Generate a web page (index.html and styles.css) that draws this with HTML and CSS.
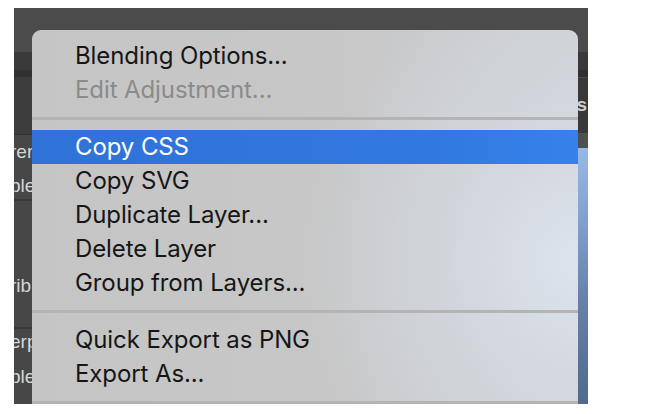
FILE: index.html
```html
<!DOCTYPE html>
<html lang="en">
<head>
<meta charset="utf-8">
<title>Layer context menu</title>
<link rel="stylesheet" href="styles.css">
</head>
<body>
<div class="screen">
  <div class="app">
    <div class="topbar"></div>
    <div class="toolbar"></div>
    <div class="panels">
      <div class="left-col">
        <div class="lhead"></div>
        <div class="group g1">
          <div class="lrow">rer</div>
          <div class="lrow">ble</div>
        </div>
        <div class="group g2">
          <div class="lrow">rib</div>
        </div>
        <div class="group g3">
          <div class="lrow">erp</div>
          <div class="lrow">ble</div>
        </div>
      </div>
      <div class="right-col">
        <div class="rhead"><span class="rlabel">Layers</span></div>
        <div class="rstrip"></div>
        <div class="canvas"></div>
      </div>
    </div>
  </div>

  <div class="menu">
    <div class="item">Blending Options...</div>
    <div class="item disabled">Edit Adjustment...</div>
    <div class="sep"></div>
    <div class="item active">Copy CSS</div>
    <div class="item">Copy SVG</div>
    <div class="item">Duplicate Layer...</div>
    <div class="item">Delete Layer</div>
    <div class="item">Group from Layers...</div>
    <div class="sep"></div>
    <div class="item">Quick Export as PNG</div>
    <div class="item">Export As...</div>
    <div class="sep"></div>
  </div>
</div>
</body>
</html>
```

FILE: styles.css
```css
html, body {
  margin: 0;
  padding: 0;
  background: #ffffff;
}

body {
  padding: 8px 0 0 14px;
  font-family: Inter, "Liberation Sans", Arial, sans-serif;
}

.screen {
  position: relative;
  width: 574px;
  height: 396px;
  overflow: hidden;
  background: #3c3c3c;
}

.app {
  display: flex;
  flex-direction: column;
  height: 100%;
}

.topbar {
  height: 44px;
  background: #4b4b4b;
}

.toolbar {
  height: 25px;
  background: linear-gradient(#3a3a3a 0, #3a3a3a 18px, #303030 18px);
}

.panels {
  flex: 1;
  display: flex;
}

.left-col {
  width: 300px;
  display: flex;
  flex-direction: column;
  background: #474747;
}

.lhead {
  height: 57px;
  background: #3d3d3d;
  border-bottom: 1px solid #333333;
}

.group {
  display: flex;
  flex-direction: column;
  border-bottom: 2px solid #383838;
  background: #474747;
}

.g1 {
  height: 64px;
}

.g2 {
  height: 128px;
  justify-content: flex-end;
  padding-bottom: 24px;
  box-sizing: border-box;
}

.g3 {
  flex: 1;
  border-bottom: none;
}

.lrow {
  height: 34px;
  line-height: 34px;
  margin-left: -4px;
  font-family: "Liberation Sans", Arial, sans-serif;
  font-size: 19px;
  color: #d6d6d6;
}

.g3 .lrow:first-child {
  height: 26px;
  line-height: 26px;
}

.g3 .lrow + .lrow {
  height: 44px;
  line-height: 44px;
}

.right-col {
  flex: 1;
  display: flex;
  flex-direction: column;
}

.rhead {
  height: 56px;
  background: #393939;
  border-top: 1px solid #4a4a4a;
  box-sizing: border-box;
  display: flex;
  align-items: center;
  justify-content: flex-end;
  padding-right: 1px;
}

.rlabel {
  font-family: "Liberation Sans", Arial, sans-serif;
  font-weight: bold;
  font-size: 19px;
  color: #cfcfcf;
  padding-bottom: 2px;
}

.rstrip {
  height: 15px;
  background: #4f4f4f;
}

.canvas {
  flex: 1;
  background: linear-gradient(180deg, #9ab8e6 0%, #819fca 30%, #6680a8 60%, #506a8c 100%);
}

/* Context menu overlay */
.menu {
  position: absolute;
  left: 18px;
  top: 22px;
  width: 546px;
  padding-top: 9px;
  border-radius: 9px 9px 0 0;
  background:
    radial-gradient(ellipse 280px 280px at 100% 60%, rgba(220, 227, 236, 1) 0%, rgba(214, 220, 229, 0.6) 45%, rgba(200, 200, 200, 0) 100%),
    linear-gradient(90deg, #c5c5c5 0%, #c7c7c7 55%, #cfd2d7 100%);
}

.item {
  height: 34px;
  line-height: 34px;
  padding-left: 43px;
  font-size: 24px;
  letter-spacing: -0.1px;
  color: #161616;
  white-space: nowrap;
}

.item.disabled {
  color: #8b8b8b;
}

.item.active {
  color: #ffffff;
  background: linear-gradient(90deg, #2f72d8 0%, #3178e0 70%, #3581ea 100%);
}

.sep {
  height: 3px;
  margin: 10px 0;
  background: #b4b4b4;
}
```
